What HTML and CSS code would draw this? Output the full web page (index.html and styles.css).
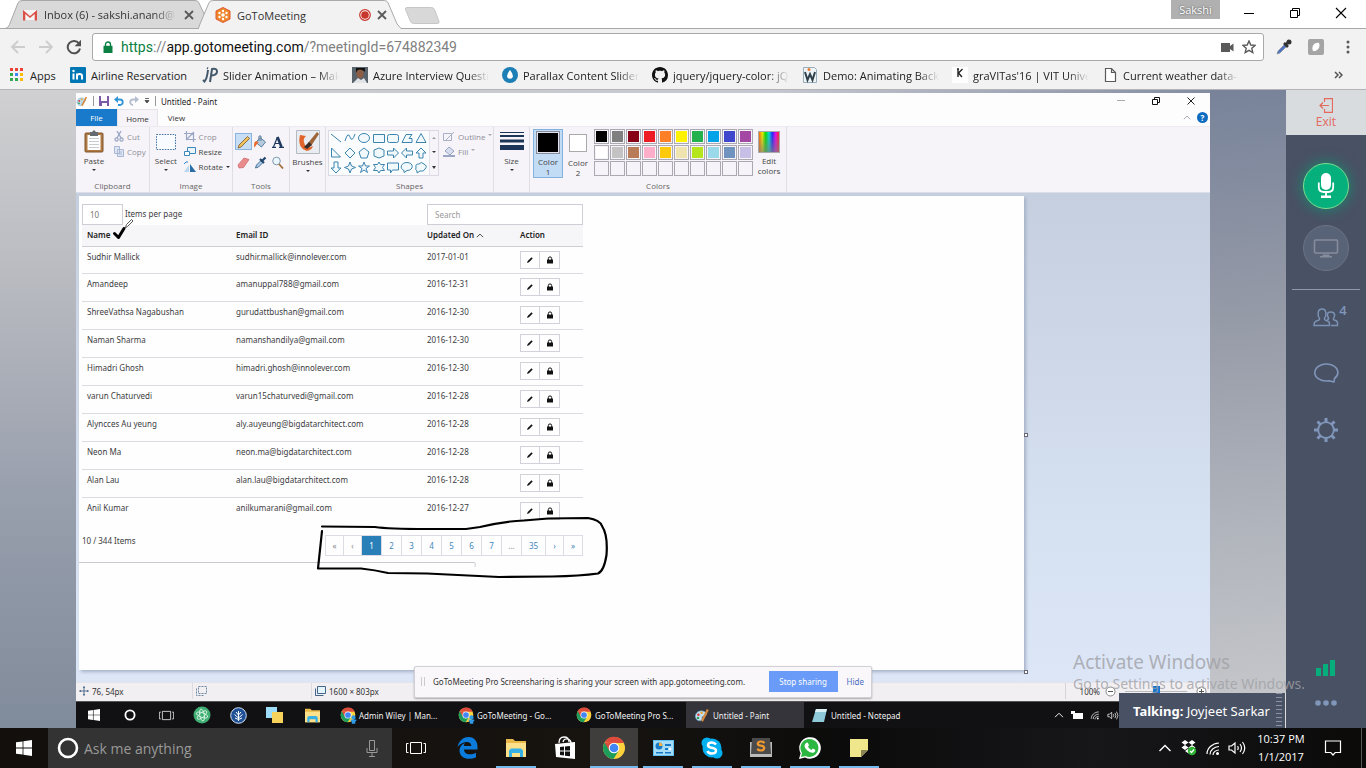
FILE: index.html
```html
<!DOCTYPE html>
<html lang="en">
<head>
<meta charset="utf-8">
<title>GoToMeeting</title>
<link rel="stylesheet" href="styles.css">
</head>
<body>
<svg class="defs" aria-hidden="true">
  <symbol id="i-pencil" viewBox="0 0 8 8"><path d="M1 7l.7-2L5.500 1.200l1.200 1.200L3 6.200z" fill="#111"/></symbol>
  <symbol id="i-lock" viewBox="0 0 8 8"><path d="M2.300 4V2.600a1.700 1.700 0 0 1 3.400 0V4" fill="none" stroke="#111"/><path d="M1 3.600h6V7.500H1z" fill="#111"/></symbol>
  <symbol id="i-win" viewBox="0 0 16 16"><path d="M0 2.300l6.600-.9v6.200H0zM7.400 1.300L16 0v7.600H7.400zM0 8.400h6.600v6.200L0 13.700zM7.400 8.400H16V16l-8.600-1.200z" fill="#fff"/></symbol>
  <symbol id="i-taskview" viewBox="0 0 20 14"><path d="M4.500 1.500h11v11h-11zM2.500 2.500h-2v9h2M17.500 2.500h2v9h-2" fill="none" stroke="#fff"/></symbol>
  <symbol id="i-chrome" viewBox="0 0 24 24"><circle cx="12" cy="12" r="11" fill="#fdd23c"/><path d="M2.500 6.500A11 11 0 0 0 11.500 23l5-8L12 12z" fill="#1c9d5b"/><path d="M2.500 6.500A11 11 0 0 1 22 7H12z" fill="#dd4b3e"/><path d="M2.500 6.500L7.500 15 12 7z" fill="#dd4b3e"/><circle cx="12" cy="12" r="5.300" fill="#fff"/><circle cx="12" cy="12" r="4.300" fill="#4285f4"/></symbol>
  <symbol id="i-folder" viewBox="0 0 22 20"><path d="M1 1h7l2 2h11v16H1z" fill="#e8b84a"/><path d="M1 5h20v14H1z" fill="#fde08a"/><path d="M4 19v-6.500l2-2h10l2 2V19h-3v-4H7v4z" fill="#37b0e6"/></symbol>
  <symbol id="i-wifi" viewBox="0 0 16 16"><g fill="none" stroke="currentColor" stroke-width="1.200"><path d="M2 14C2 8 7 3.500 14 3"/><path d="M5 14.500C5 10 9 7 14 6.500"/><path d="M8 15c0-3 3-5 6-5"/></g><circle cx="12.500" cy="13.500" r="1.500" fill="currentColor"/></symbol>
  <symbol id="i-vol" viewBox="0 0 18 14"><path d="M1 5h2.500L7 2v10L3.500 9H1zM9.500 5q1.500 2 0 4M12 3q3 4 0 8M14.500 1q4.500 6 0 12" fill="none" stroke="currentColor" stroke-width="1.200"/></symbol>
  <symbol id="i-palette" viewBox="0 0 20 18"><path d="M2 12C0 6 7 1 13 4c5 3 2 6-1 6-2 0-2 2-2 4s-6 3-8-2z" fill="#bfe0f2" stroke="#5b93b8" stroke-width=".8"/><circle cx="5.500" cy="8" r="1.600" fill="#d33"/><circle cx="9.500" cy="5.500" r="1.600" fill="#e8a52b"/><circle cx="5" cy="12" r="1.500" fill="#2a9b4e"/><path d="M9 15l7-14 2.500 1.200L11 17z" fill="#d68a3c"/></symbol>
  <symbol id="i-person" viewBox="0 0 10 12"><circle cx="5" cy="3" r="3" fill="#2f9be8"/><path d="M1 6h8v2L7.500 9v3h-5V9L1 8z" fill="#2f9be8"/></symbol>
  <symbol id="i-chev" viewBox="0 0 14 8"><path d="M1.500 7L7 1.500 12.500 7" fill="none" stroke="currentColor" stroke-width="1.400"/></symbol>
</svg>

<header class="browser">
  <div class="tabstrip">
    <div class="tab tab-one">
      <svg class="tab-shape" viewBox="0 0 206 29" preserveAspectRatio="none"><path d="M0 28.500q3 0 4.500-4L13 3q1-2.500 4-2.500h173q3 0 4 2.500l8 17 4 8.500z" fill="#d9d9d9" stroke="#a8a8a8"/></svg>
      <svg width="14" height="12" viewBox="0 0 14 12"><path d="M1 1h12v10H1z" fill="#f5f5f5"/><path d="M0 11.500V1l7 6 7-6v10.500h-2.300V5L7 9 2.300 5v6.500z" fill="#dc5147"/></svg>
      <span class="tab-title fade">Inbox (6) - sakshi.anand@</span>
      <button class="tab-close" aria-label="Close tab"><svg width="10" height="10" viewBox="0 0 10 10"><path d="M1 1l8 8M9 1L1 9" stroke="#5a5a5a" stroke-width="1.800"/></svg></button>
    </div>
    <div class="tab tab-two">
      <svg class="tab-shape" viewBox="0 0 208 29" preserveAspectRatio="none"><path d="M0 29.500L2 24 11 3q1-2.500 4-2.500h173q3 0 4 2.500l9 21 4 4.500v2z" fill="#f2f2f2" stroke="#a8a8a8"/></svg>
      <svg width="16" height="16" viewBox="0 0 16 16"><path d="M8 .5L15 4v8l-7 3.500L1 12V4z" fill="#f0872b" stroke="#dd5a2b"/><circle cx="8" cy="8" r="1.800" fill="#fff"/><g fill="#fff"><circle cx="8" cy="4" r="1.200"/><circle cx="8" cy="12" r="1.200"/><circle cx="4.500" cy="6" r="1.200"/><circle cx="11.500" cy="6" r="1.200"/><circle cx="4.500" cy="10" r="1.200"/><circle cx="11.500" cy="10" r="1.200"/></g></svg>
      <span class="tab-title">GoToMeeting</span>
      <svg width="12" height="12" viewBox="0 0 12 12"><circle cx="6" cy="6" r="5.300" fill="#fff" stroke="#c8372d" stroke-width="1.200"/><circle cx="6" cy="6" r="3.800" fill="#c8372d"/></svg>
      <button class="tab-close" aria-label="Close tab"><svg width="10" height="10" viewBox="0 0 10 10"><path d="M1 1l8 8M9 1L1 9" stroke="#5a5a5a" stroke-width="1.800"/></svg></button>
    </div>
    <button class="newtab" aria-label="New tab"><svg width="36" height="19" viewBox="0 0 36 19"><path d="M2.500 1.500h25q2 0 3 2l4.500 12q.5 2-1.500 2h-24q-2 0-3-2L1.500 3.500q-.5-2 1-2z" fill="#d8d8d8" stroke="#c6c6c6"/></svg></button>
    <div class="win-controls">
      <button class="profile">Sakshi</button>
      <button aria-label="Minimize"><svg width="12" height="12" viewBox="0 0 12 12"><path d="M1 6.500h10" stroke="#000"/></svg></button>
      <button aria-label="Restore"><svg width="12" height="12" viewBox="0 0 12 12"><path d="M1.500 3.500h7v7h-7zM3.500 3.500v-2h7v7h-2" fill="none" stroke="#000"/></svg></button>
      <button aria-label="Close"><svg width="12" height="12" viewBox="0 0 12 12"><path d="M1 1l10 10M11 1L1 11" stroke="#000" stroke-width="1.100"/></svg></button>
    </div>
  </div>
  <div class="toolbar">
    <button aria-label="Back"><svg width="16" height="16" viewBox="0 0 16 16"><path d="M15 8H2M8 2L2 8l6 6" fill="none" stroke="#ccc" stroke-width="1.800"/></svg></button>
    <button aria-label="Forward"><svg width="16" height="16" viewBox="0 0 16 16"><path d="M1 8h13M8 2l6 6-6 6" fill="none" stroke="#ccc" stroke-width="1.800"/></svg></button>
    <button aria-label="Reload"><svg width="16" height="16" viewBox="0 0 16 16"><path d="M13 4.500A6.200 6.200 0 1 0 14 9.500" fill="none" stroke="#505050" stroke-width="2"/><path d="M15 .8v6.400H8.600z" fill="#505050"/></svg></button>
    <div class="omnibox">
      <svg width="10" height="12" viewBox="0 0 10 12"><path d="M2.500 6V3.500a2.500 2.500 0 0 1 5 0V6" fill="none" stroke="#0b8043" stroke-width="1.400"/><path d="M.5 4.800h9V12h-9z" fill="#0b8043"/></svg>
      <div class="url" role="textbox" aria-label="Address" contenteditable="true" spellcheck="false"><span class="secure">https</span>://<span class="host">app.gotomeeting.com</span>/?meetingId=674882349</div>
      <svg width="13" height="9" viewBox="0 0 13 9"><path d="M0 0h9v3l3.500-2.500v8L9 6v3H0z" fill="#5a5a5a"/></svg>
      <svg width="14" height="14" viewBox="0 0 14 14"><path d="M7 1l1.800 4 4.200.4-3.200 2.900 1 4.300L7 10.400l-3.800 2.200 1-4.300L1 5.400 5.200 5z" fill="none" stroke="#5a5a5a" stroke-width="1.400"/></svg>
    </div>
    <div class="extensions">
      <button aria-label="Color picker"><svg width="16" height="16" viewBox="0 0 16 16"><path d="M1 15l1-3 6.500-6.500 2 2L4 14z" fill="#4f73c4" stroke="#8b9097" stroke-width=".8"/><path d="M8 4l4 4M9.500 6l4-4" stroke="#333" stroke-width="2.600"/><circle cx="13" cy="3" r="2.500" fill="#333"/></svg></button>
      <button aria-label="Extension"><svg width="16" height="16" viewBox="0 0 16 16"><rect width="16" height="16" rx="2" fill="#a4a4a4"/><path d="M5 12C3 8 6 3 11 4c2 4-2 9-6 8z" fill="#fff"/></svg></button>
      <button class="menu" aria-label="Menu"><svg width="4" height="14" viewBox="0 0 4 14"><g fill="#5a5a5a"><circle cx="2" cy="2" r="1.500"/><circle cx="2" cy="7" r="1.500"/><circle cx="2" cy="12" r="1.500"/></g></svg></button>
    </div>
  </div>
  <nav class="bookmarks">
    <a class="bm bm-apps" href="#"><svg width="14" height="14" viewBox="0 0 14 14"><path d="M0 0h3v3H0zM5 0h3v3H5zM10 0h3v3h-3z" fill="#ea4335"/><path d="M0 5h3v3H0z" fill="#34a853"/><path d="M5 5h3v3H5z" fill="#4285f4"/><path d="M10 5h3v3h-3zM10 10h3v3h-3z" fill="#fbbc05"/><path d="M0 10h3v3H0zM5 10h3v3H5z" fill="#34a853"/></svg><span>Apps</span></a>
    <a class="bm bm-air" href="#"><svg width="16" height="16" viewBox="0 0 16 16"><rect width="16" height="16" rx="1" fill="#0077b5"/><path d="M3.500 6.500v6M7 12.500v-6M7 12.500V9q0-2 2.500-2T12 9v3.500" fill="none" stroke="#fff" stroke-width="2"/><circle cx="3.500" cy="4" r="1.200" fill="#fff"/></svg><span>Airline Reservation</span></a>
    <a class="bm" href="#"><svg width="16" height="16" viewBox="0 0 16 16"><path d="M6 3Q5 12 2.500 14.500L1 13M8 15L10 2q5-1 5 2.500T9.500 8.500M5 1l1 .5" fill="none" stroke="#44586c" stroke-width="2"/></svg><span class="fade">Slider Animation – Make</span></a>
    <a class="bm" href="#"><svg width="16" height="16" viewBox="0 0 16 16"><path d="M0 0h16v16H0z" fill="#59636b"/><path d="M4 1h9v4l-2-2H6L4 6z" fill="#15110f"/><ellipse cx="8" cy="6.500" rx="3.500" ry="4.500" fill="#8d5d43"/><path d="M1 16l5-5 3 2 3-2 3 5z" fill="#e1e3e7"/><path d="M4 4q4-3 8 0V1H4z" fill="#111"/></svg><span class="fade">Azure Interview Questio</span></a>
    <a class="bm" href="#"><svg width="16" height="16" viewBox="0 0 16 16"><circle cx="8" cy="8" r="8" fill="#1c7fb5"/><path d="M8 3q4 5 2.500 7.500a3 3 0 0 1-5 0Q4 8 8 3z" fill="#fff"/></svg><span class="fade">Parallax Content Slider</span></a>
    <a class="bm" href="#"><svg width="16" height="16" viewBox="0 0 16 16"><path fill-rule="evenodd" fill="#111" d="M8 0C3.580 0 0 3.580 0 8c0 3.540 2.290 6.530 5.470 7.590.4.070.55-.17.550-.38 0-.19-.01-.82-.01-1.490-2.010.37-2.530-.49-2.690-.94-.09-.23-.48-.94-.82-1.130-.28-.15-.68-.52-.01-.53.630-.01 1.080.58 1.230.82.720 1.210 1.870.87 2.330.66.070-.52.280-.87.510-1.070-1.780-.2-3.640-.89-3.640-3.950 0-.87.310-1.590.820-2.150-.08-.2-.36-1.020.08-2.120 0 0 .67-.21 2.200.82.640-.18 1.320-.27 2-.27s1.360.09 2 .27c1.530-1.040 2.200-.82 2.200-.82.440 1.100.16 1.920.08 2.120.51.560.82 1.270.82 2.150 0 3.070-1.870 3.750-3.650 3.950.29.250.54.730.54 1.480 0 1.070-.01 1.930-.01 2.200 0 .21.15.46.55.38A8.010 8.010 0 0 0 16 8c0-4.420-3.580-8-8-8z"/></svg><span class="fade">jquery/jquery-color: jQu</span></a>
    <a class="bm" href="#"><svg width="16" height="16" viewBox="0 0 16 16"><path d="M1.500.5h11l2 2v13h-13z" fill="#eef4f7" stroke="#9aaeb9"/><path d="M3 5l2.500 8L8 7l2.500 6L13 5" fill="none" stroke="#30414c" stroke-width="2"/><circle cx="7" cy="2.500" r="1.500" fill="#e77c35"/></svg><span class="fade">Demo: Animating Back</span></a>
    <a class="bm" href="#"><svg width="16" height="16" viewBox="0 0 16 16"><path d="M0 0h16v16H0z" fill="#fff"/><path d="M6 2v8M10.500 2L6.500 6l3.500 4M5 2h2" fill="none" stroke="#222" stroke-width="1.400"/></svg><span class="fade">graVITas'16 | VIT Univer</span></a>
    <a class="bm" href="#"><svg width="16" height="16" viewBox="0 0 16 16"><path d="M3.500 1.500h6l4 4v9h-10zM9.500 1.500v4h4" fill="#fff" stroke="#5a5a5a" stroke-width="1.200"/></svg><span class="fade">Current weather data-</span></a>
    <button class="bm-more" aria-label="More bookmarks"><svg width="9" height="8" viewBox="0 0 9 8"><path d="M1 1l3 3-3 3M5 1l3 3-3 3" fill="none" stroke="#555" stroke-width="1.500"/></svg></button>
  </nav>
</header>

<main class="meeting">
  <section class="stage">
    <div class="paint">
      <div class="p-title">
        <svg width="12" height="11"><use href="#i-palette"/></svg>
        <i class="p-sep"></i>
        <button aria-label="Save"><svg width="10" height="10" viewBox="0 0 10 10"><path d="M0 0h10v10H0z" fill="#7b5ba6"/><path d="M2 0h6v5H2zM3 7h5v3H3z" fill="#fff"/></svg></button>
        <button aria-label="Undo"><svg width="10" height="10" viewBox="0 0 10 10"><path d="M2 3.500h4a2.500 2.500 0 0 1 0 5.500H4" fill="none" stroke="#2f95d6" stroke-width="1.800"/><path d="M0 3.500L4 0v7z" fill="#2f95d6"/></svg></button>
        <button aria-label="Redo"><svg width="10" height="10" viewBox="0 0 10 10"><path d="M8 3.500H4A2.500 2.500 0 0 0 4 9" fill="none" stroke="#b5bdd0" stroke-width="1.800"/><path d="M10 3.500L6 0v7z" fill="#b5bdd0"/></svg></button>
        <button aria-label="Customize"><svg width="6" height="6" viewBox="0 0 6 6"><path d="M1 .5h4M1 2.500h4L3 5z" stroke="#444" stroke-width=".8" fill="#444"/></svg></button>
        <i class="p-sep"></i>
        <span>Untitled - Paint</span>
        <div class="p-win">
          <button aria-label="Minimize"><svg width="10" height="10" viewBox="0 0 10 10"><path d="M1 4.500h8" stroke="#aaa"/></svg></button>
          <button aria-label="Restore"><svg width="10" height="10" viewBox="0 0 10 10"><path d="M1.500 3.500h5v5h-5zM3.500 3.500v-2h5v5h-2" fill="none" stroke="#111"/></svg></button>
          <button aria-label="Close"><svg width="10" height="10" viewBox="0 0 10 10"><path d="M1.500 1.500l7 7M8.500 1.500l-7 7" stroke="#222"/></svg></button>
        </div>
      </div>
      <div class="p-tabs">
        <button class="p-file">File</button>
        <button class="p-home">Home</button>
        <button class="p-view">View</button>
        <div class="p-help">
          <svg width="8" height="5" class="muted"><use href="#i-chev"/></svg>
          <button aria-label="Help" class="help">?</button>
        </div>
      </div>
      <div class="ribbon">
        <div class="group g-clip">
          <div class="g-body">
            <button class="big"><svg width="20" height="23" viewBox="0 0 20 23"><rect x="1" y="3" width="18" height="19" rx="1" fill="#b07a45" stroke="#80542b"/><path d="M3.500 5h13v15h-13z" fill="#fff"/><path d="M5 8.500h10M5 11.500h10M5 14.500h10M5 17.500h10" stroke="#c9cdd2"/><path d="M6 2h2l2-2 2 2h2v4H6z" fill="#666b72"/></svg><span>Paste</span><i class="caret"></i></button>
            <div class="stack muted">
              <button><svg width="10" height="11" viewBox="0 0 10 11"><path d="M3 0l4 7M7 0L3 7" stroke="#9aa6c4" stroke-width="1.300"/><circle cx="2.500" cy="8.500" r="1.600" fill="none" stroke="#9aa6c4" stroke-width="1.200"/><circle cx="7.500" cy="8.500" r="1.600" fill="none" stroke="#9aa6c4" stroke-width="1.200"/></svg>Cut</button>
              <button><svg width="10" height="11" viewBox="0 0 10 11"><path d="M.5.5h5v7h-5zM3.500 3.500h6v7h-6z" fill="#dfe6f3" stroke="#a8b5d3"/><path d="M5 6h3M5 8h3" stroke="#a8b5d3"/></svg>Copy</button>
            </div>
          </div>
          <span class="g-name">Clipboard</span>
        </div>
        <div class="group g-image">
          <div class="g-body">
            <button class="big"><svg width="22" height="23" viewBox="0 0 22 23"><path d="M1.500 4.500h19v15h-19z" fill="#f8fbff" stroke="#3f6f9f" stroke-dasharray="1.500 1.200"/></svg><span>Select</span><i class="caret"></i></button>
            <div class="stack">
              <button class="muted"><svg width="12" height="11" viewBox="0 0 12 11"><path d="M2.500 0v8.500H12M0 2.500h9.500V11M2 9l8-8" fill="none" stroke="#9aa6c4" stroke-width="1.200"/></svg>Crop</button>
              <button><svg width="12" height="11" viewBox="0 0 12 11"><path d="M3.500 1.500h8v6h-8z" fill="#eaf4fc" stroke="#3b87bc"/><path d="M.5 5.500h5v4h-5z" fill="#fff" stroke="#3b87bc"/></svg>Resize</button>
              <button><svg width="12" height="11" viewBox="0 0 12 11"><path d="M6 3l6 8H6z" fill="#2c6ca5"/><path d="M5 4v7H0z" fill="#b9d7ee"/><path d="M0 3q2-3 4-2" fill="none" stroke="#2c86d0"/></svg>Rotate<i class="caret"></i></button>
            </div>
          </div>
          <span class="g-name">Image</span>
        </div>
        <div class="group g-tools">
          <div class="tool-grid">
            <button class="on" aria-label="Pencil"><svg width="14" height="14" viewBox="0 0 14 14"><path d="M1 13l1-3L10.500 1.500l2 2L4 12z" fill="#f0c05a" stroke="#7b5b30" stroke-width=".8"/></svg></button>
            <button aria-label="Fill"><svg width="13" height="13" viewBox="0 0 13 13"><path d="M6 2.500l5.500 4.500-4 5-5.500-4.500z" fill="#b5cbe0" stroke="#5c7e9e"/><path d="M5 6V1h2v5" fill="none" stroke="#5c7e9e"/><path d="M.5 7.500q-1 3 0 5l4-5.500q-3-1.500-4 .5z" fill="#ec6a2c"/></svg></button>
            <button aria-label="Text"><svg width="12" height="12" viewBox="0 0 12 12"><path d="M0 11.300h4M7 11.300h5M3 7.500h5" stroke="#1f3a5f" stroke-width="1.200"/><path d="M1.500 11L5.500 1" stroke="#1f3a5f" stroke-width="1.200"/><path d="M5.500 1l4 10" stroke="#1f3a5f" stroke-width="2.600"/></svg></button>
            <button aria-label="Eraser"><svg width="13" height="12" viewBox="0 0 13 12"><path d="M1 8l6-7 5 1.500-5.500 8L2 11z" fill="#eb8c8c" stroke="#c96a6e" stroke-width=".8"/></svg></button>
            <button aria-label="Pick color"><svg width="13" height="13" viewBox="0 0 13 13"><path d="M1.500 12l1-3L7 4.500l2 2L4.500 11z" fill="#a9cbe7" stroke="#4c7396"/><path d="M6 3l4 4M8 5l3.500-3.500" stroke="#20466e" stroke-width="2.200"/></svg></button>
            <button aria-label="Magnifier"><svg width="13" height="13" viewBox="0 0 13 13"><circle cx="5.500" cy="5" r="3.800" fill="#eaf5fd" stroke="#7f99ad"/><path d="M8 8l4 4.500" stroke="#a36f3c" stroke-width="1.800"/></svg></button>
          </div>
          <span class="g-name">Tools</span>
        </div>
        <div class="group g-brush">
          <div class="g-body">
            <button class="big"><svg width="24" height="24" viewBox="0 0 24 24"><path d="M.5.5h23v23H.5z" fill="#e9ecf1" stroke="#b5b9c2"/><path d="M4 5q-3 13 7 16 5-1 6-5-6 3-8-1Q6 9 10 6z" fill="#e2652c"/><path d="M12 13L21 2l2 2-8 12z" fill="#9c6438"/><path d="M8 17l5-5 3 3-5 4z" fill="#3a2d28"/></svg><span>Brushes</span><i class="caret"></i></button>
          </div>
        </div>
        <div class="group g-shapes">
          <div class="g-body">
            <div class="shape-box">
              <svg width="100" height="44" viewBox="0 0 100 44"><g fill="#f2f9fd" stroke="#3d85ad"><path d="M2 3l10 8"/><path d="M16 10q3-10 5-4t5-3" fill="none"/><ellipse cx="35" cy="7" rx="5.500" ry="4.500"/><path d="M44.500 3.500h11v8h-11z"/><rect x="58.500" y="3.500" width="11" height="8" rx="2"/><path d="M73 11.500l4-8h6l-3 4h3v4z"/><path d="M92 2.500l5 9H87z"/><path d="M2.500 17v9h9z"/><path d="M21 17l5 5-5 5-5-5z"/><path d="M35 17l5 4-2 6h-6l-2-6z"/><path d="M45 19l5-2 5 2v6l-5 2-5-2z"/><path d="M58.500 20h6v-3l5 5-5 5v-3h-6z"/><path d="M83.500 20h-6v-3l-5 5 5 5v-3h6z"/><path d="M90 27v-5h-3l5-5 5 5h-3v5z"/><path d="M5 31v6H2l5 5 5-5H9v-6z"/><path d="M21 31l1.500 4 4 1.500-4 1.500L21 42l-1.500-4-4-1.500 4-1.500z"/><path d="M35 31l1.500 4h4L37 37.500l1.500 4L35 39l-3.500 2.500 1.500-4-3.500-2.500h4z"/><path d="M50 31l1.500 2.500h4L53.500 36.500l2 3h-4L50 42l-1.500-2.500h-4l2-3-2-3h4z"/><path d="M58.500 32h11v7h-6l-2 3v-3h-3z"/><path d="M78 31.500c7 0 7 8 0 8l-3 2v-2c-5-2-3-8 3-8z"/><path d="M87 36q-1-3 3-3 2-3 5 0 4 2 1 5-1 3-5 2l-3 2v-2q-2-1-1-4z"/></g></svg>
              <div class="scroll"><i class="caret up"></i><i class="caret"></i><i class="caret last"></i></div>
            </div>
            <div class="stack muted">
              <button><svg width="12" height="11" viewBox="0 0 12 11"><path d="M.5 2.500h8v7h-8zM3 9l8-8" fill="none" stroke="#a8b0c6"/></svg>Outline<i class="caret pale"></i></button>
              <button><svg width="12" height="11" viewBox="0 0 12 11"><path d="M2 5l4-4 5 4-4 4z" fill="#d7deed" stroke="#9aa6c4"/><path d="M0 9h12v2H0z" fill="#9aa6c4"/></svg>Fill<i class="caret pale"></i></button>
            </div>
          </div>
          <span class="g-name">Shapes</span>
        </div>
        <div class="group g-size">
          <div class="g-body">
            <button class="big"><svg width="24" height="23" viewBox="0 0 24 23"><path d="M0 2h24v1H0zM0 5h24v2H0zM0 9.500h24v3H0zM0 15h24v5H0z" fill="#1d3557"/></svg><span>Size</span><i class="caret"></i></button>
          </div>
        </div>
        <div class="group g-colors">
          <div class="g-body">
            <button class="col col-on"><i class="sw-big"></i><span>Color<br>1</span></button>
            <button class="col"><i class="sw-small"></i><span>Color<br>2</span></button>
            <div class="palette">
              <i class="c-black"></i><i class="c-gray"></i><i class="c-maroon"></i><i class="c-red"></i><i class="c-orange"></i><i class="c-yellow"></i><i class="c-green"></i><i class="c-blue"></i><i class="c-indigo"></i><i class="c-purple"></i>
              <i class="c-white"></i><i class="c-silver"></i><i class="c-brown"></i><i class="c-pink"></i><i class="c-gold"></i><i class="c-cream"></i><i class="c-lime"></i><i class="c-sky"></i><i class="c-steel"></i><i class="c-lilac"></i>
              <i></i><i></i><i></i><i></i><i></i><i></i><i></i><i></i><i></i><i></i>
            </div>
            <button class="col col-edit"><i class="rainbow"></i><span>Edit<br>colors</span></button>
          </div>
          <span class="g-name">Colors</span>
        </div>
      </div>

      <div class="workspace">
        <div class="canvas">
          <div class="doc">
            <div class="filters">
              <div><input id="pp" class="inp inp-n" type="text" value="10"><label for="pp">Items per page</label></div>
              <input class="inp inp-s" type="text" placeholder="Search" aria-label="Search">
            </div>
            <table>
              <thead><tr><th class="t-name">Name</th><th class="t-mail">Email ID</th><th class="t-date">Updated On <svg width="8" height="5"><use href="#i-chev"/></svg></th><th>Action</th></tr></thead>
              <tbody>
                <tr><td>Sudhir Mallick</td><td>sudhir.mallick@innolever.com</td><td>2017-01-01</td><td><div class="acts"><button aria-label="Edit"><svg width="8" height="8"><use href="#i-pencil"/></svg></button><button aria-label="Lock"><svg width="8" height="8"><use href="#i-lock"/></svg></button></div></td></tr>
                <tr><td>Amandeep</td><td>amanuppal788@gmail.com</td><td>2016-12-31</td><td><div class="acts"><button aria-label="Edit"><svg width="8" height="8"><use href="#i-pencil"/></svg></button><button aria-label="Lock"><svg width="8" height="8"><use href="#i-lock"/></svg></button></div></td></tr>
                <tr><td>ShreeVathsa Nagabushan</td><td>gurudattbushan@gmail.com</td><td>2016-12-30</td><td><div class="acts"><button aria-label="Edit"><svg width="8" height="8"><use href="#i-pencil"/></svg></button><button aria-label="Lock"><svg width="8" height="8"><use href="#i-lock"/></svg></button></div></td></tr>
                <tr><td>Naman Sharma</td><td>namanshandilya@gmail.com</td><td>2016-12-30</td><td><div class="acts"><button aria-label="Edit"><svg width="8" height="8"><use href="#i-pencil"/></svg></button><button aria-label="Lock"><svg width="8" height="8"><use href="#i-lock"/></svg></button></div></td></tr>
                <tr><td>Himadri Ghosh</td><td>himadri.ghosh@innolever.com</td><td>2016-12-30</td><td><div class="acts"><button aria-label="Edit"><svg width="8" height="8"><use href="#i-pencil"/></svg></button><button aria-label="Lock"><svg width="8" height="8"><use href="#i-lock"/></svg></button></div></td></tr>
                <tr><td>varun Chaturvedi</td><td>varun15chaturvedi@gmail.com</td><td>2016-12-28</td><td><div class="acts"><button aria-label="Edit"><svg width="8" height="8"><use href="#i-pencil"/></svg></button><button aria-label="Lock"><svg width="8" height="8"><use href="#i-lock"/></svg></button></div></td></tr>
                <tr><td>Alyncces Au yeung</td><td>aly.auyeung@bigdatarchitect.com</td><td>2016-12-28</td><td><div class="acts"><button aria-label="Edit"><svg width="8" height="8"><use href="#i-pencil"/></svg></button><button aria-label="Lock"><svg width="8" height="8"><use href="#i-lock"/></svg></button></div></td></tr>
                <tr><td>Neon Ma</td><td>neon.ma@bigdatarchitect.com</td><td>2016-12-28</td><td><div class="acts"><button aria-label="Edit"><svg width="8" height="8"><use href="#i-pencil"/></svg></button><button aria-label="Lock"><svg width="8" height="8"><use href="#i-lock"/></svg></button></div></td></tr>
                <tr><td>Alan Lau</td><td>alan.lau@bigdatarchitect.com</td><td>2016-12-28</td><td><div class="acts"><button aria-label="Edit"><svg width="8" height="8"><use href="#i-pencil"/></svg></button><button aria-label="Lock"><svg width="8" height="8"><use href="#i-lock"/></svg></button></div></td></tr>
                <tr><td>Anil Kumar</td><td>anilkumarani@gmail.com</td><td>2016-12-27</td><td><div class="acts"><button aria-label="Edit"><svg width="8" height="8"><use href="#i-pencil"/></svg></button><button aria-label="Lock"><svg width="8" height="8"><use href="#i-lock"/></svg></button></div></td></tr>
              </tbody>
            </table>
            <div class="pager-row">
              <span>10 / 344 Items</span>
              <nav class="pager"><a href="#" class="dim arr">«</a><a href="#" class="dim arr">‹</a><a href="#" class="cur">1</a><a href="#">2</a><a href="#">3</a><a href="#">4</a><a href="#">5</a><a href="#">6</a><a href="#">7</a><a href="#" class="dim">...</a><a href="#" class="wide">35</a><a href="#" class="arr">›</a><a href="#" class="arr">»</a></nav>
            </div>
          </div>
          <svg class="ink" width="945" height="474" viewBox="79 196 945 474"><g fill="none" stroke-linecap="round" stroke-linejoin="round"><path d="M79 562.500h395q2 0 1 4" stroke="#ccc8d2"/><path d="M322 526.500L375 527Q388 529 427 529L466 529 480 527Q505 521 524 520.500L548 518.500 588 518Q600 520 602 526 608 535 606.500 555 604 571 598 573.500 580 576 552 576.500L499 577Q440 574 427 573.500L388 573Q375 570 361 568.500L318 568.500 322 531" stroke="#000" stroke-width="2.200"/><path d="M114.500 233.500l4 4q3-5 5.500-9" stroke="#000" stroke-width="3"/><path d="M125.500 227.500l1-3 5-5 1.500 1.500-5 5z" stroke="#555" fill="#fff"/></g></svg>
          <i class="handle h-right"></i><i class="handle h-corner"></i>
        </div>
      </div>

      <div class="p-status">
        <span class="st st-pos"><svg width="10" height="10" viewBox="0 0 10 10"><path d="M5 0v10M0 5h10M4 1.500h2M4 8.500h2M1.500 4v2M8.500 4v2" stroke="#55708f"/></svg>76, 54px</span>
        <span class="st st-sel"><svg width="11" height="10" viewBox="0 0 11 10"><path d="M.5 2.500v7h8M2.500.5h8v7h-8z" fill="none" stroke="#7089a5" stroke-dasharray="2 1"/></svg></span>
        <span class="st st-dim"><svg width="11" height="10" viewBox="0 0 11 10"><path d="M.5 2.500v7h8" fill="none" stroke="#44658a"/><path d="M2.500.5h8v7h-8z" fill="#e3f4fa" stroke="#44658a"/></svg>1600 × 803px</span>
        <div class="zoomer"><span>100%</span><button class="zb" aria-label="Zoom out"><svg width="11" height="11" viewBox="0 0 11 11"><circle cx="5.500" cy="5.500" r="4.500" fill="#fff" stroke="#888"/><path d="M3 5.500h5" stroke="#555"/></svg></button><input type="range" aria-label="Zoom" class="range"><button class="zb" aria-label="Zoom in"><svg width="11" height="11" viewBox="0 0 11 11"><circle cx="5.500" cy="5.500" r="4.500" fill="#fff" stroke="#888"/><path d="M3 5.500h5M5.500 3v5" stroke="#555"/></svg></button></div>
      </div>

      <div class="inner-bar">
        <button class="ib" aria-label="Start"><svg width="12" height="12"><use href="#i-win"/></svg></button>
        <button class="ib" aria-label="Cortana"><svg width="12" height="12" viewBox="0 0 12 12"><circle cx="6" cy="6" r="4.600" fill="none" stroke="#fff" stroke-width="1.800"/></svg></button>
        <button class="ib" aria-label="Task view"><svg width="15" height="11"><use href="#i-taskview"/></svg></button>
        <button class="ib" aria-label="Atom"><svg width="18" height="18" viewBox="0 0 18 18"><circle cx="9" cy="9" r="8.500" fill="#3fae73"/><g fill="none" stroke="#d9f5e6" stroke-width=".9"><ellipse cx="9" cy="9" rx="6" ry="2.300" transform="rotate(20 9 9)"/><ellipse cx="9" cy="9" rx="6" ry="2.300" transform="rotate(80 9 9)"/><ellipse cx="9" cy="9" rx="6" ry="2.300" transform="rotate(140 9 9)"/></g></svg></button>
        <button class="ib" aria-label="SourceTree"><svg width="17" height="17" viewBox="0 0 17 17"><circle cx="8.500" cy="8.500" r="7.800" fill="#1f4f95" stroke="#d6e3f5"/><path d="M8.500 14V4M8.500 11L4.500 7.500M8.500 11l4-3.500M8.500 8L6 5M8.500 8L11 5M5 11l3.500 1.500L12 11" stroke="#fff" fill="none"/></svg></button>
        <button class="ib" aria-label="Sticky Notes"><svg width="17" height="16" viewBox="0 0 17 16"><path d="M0 0h11v11H0z" fill="#9fdcf7"/><path d="M6 5h11v11H6z" fill="#f8d35c"/></svg></button>
        <button class="ib" aria-label="Explorer"><svg width="17" height="15"><use href="#i-folder"/></svg></button>
        <button class="task"><span class="badge-ic"><svg width="16" height="16"><use href="#i-chrome"/></svg><svg class="mini" width="7" height="9"><use href="#i-person"/></svg></span>Admin Wiley | Man...</button>
        <button class="task"><span class="badge-ic"><svg width="16" height="16"><use href="#i-chrome"/></svg><svg class="mini" width="7" height="9"><use href="#i-person"/></svg></span>GoToMeeting - Go...</button>
        <button class="task"><svg width="16" height="16"><use href="#i-chrome"/></svg>GoToMeeting Pro S...</button>
        <button class="task task-on"><svg width="16" height="15"><use href="#i-palette"/></svg>Untitled - Paint</button>
        <button class="task"><svg width="16" height="15" viewBox="0 0 16 15"><path d="M4 1h11l-3 13H0z" fill="#8ec9d9"/><path d="M4 1h11l-1 3H3z" fill="#d9eff4"/></svg>Untitled - Notepad</button>
        <div class="inner-tray"><svg width="10" height="6"><use href="#i-chev"/></svg><svg width="12" height="8" viewBox="0 0 12 8"><path d="M2 2h10v6H2zM0 0h4v3H0z" fill="#fff"/></svg><svg width="10" height="10"><use href="#i-wifi"/></svg><svg width="12" height="9"><use href="#i-vol"/></svg></div>
      </div>

      <div class="share">
        <i class="grip"></i>
        <span>GoToMeeting Pro Screensharing is sharing your screen with app.gotomeeting.com.</span>
        <button>Stop sharing</button>
        <a href="#">Hide</a>
      </div>
    </div>
  </section>

  <aside class="side">
    <button class="exit"><svg width="14" height="15" viewBox="0 0 14 15"><path d="M5.500 4V.7h8v13.600h-8V11M10 7.500H1M4 4.500l-3 3 3 3" fill="none" stroke="#e36a5e" stroke-width="1.200"/></svg>Exit</button>
    <button class="round mic" aria-label="Microphone"><svg width="18" height="26" viewBox="0 0 18 26"><rect x="4" y="0" width="10" height="17" rx="5" fill="#fff"/><path d="M1.800 9.500v4.500q0 5 5 5h4.400q5 0 5-5V9.500M9 19v4" fill="none" stroke="#fff" stroke-width="1.800"/><path d="M4 22.500h10V25H4z" fill="#fff"/></svg></button>
    <button class="round screen" aria-label="Screen"><svg width="26" height="19" viewBox="0 0 26 19"><rect x="1.500" y="1" width="23" height="13" rx="1" fill="none" stroke="#858d9d" stroke-width="1.600"/><path d="M10 15.500h6l.8 1.500H19v1.500H7V17h2.200z" fill="#858d9d"/></svg></button>
    <hr>
    <button class="si people" aria-label="People"><svg width="26" height="20" viewBox="0 0 26 20"><g fill="none" stroke="#7c92b4" stroke-width="1.500"><path d="M1 18.500q0-4 3-4.700t2.500-2.500C4.500 9 4 2 9 2s4.500 7 2.500 9.300q-.5 1.800 2.500 2.500t2.500 4.700z"/><path d="M14 12.500q2 0 1.500-1.500C13.500 8 14 5 18 5s4.500 4 2.500 6.500q-.5 1.500 2 2t2 5H18"/></g></svg><sup>4</sup></button>
    <button class="si" aria-label="Chat"><svg width="26" height="21" viewBox="0 0 26 21"><path d="M16 17.800A11.500 8.500 0 1 1 21.500 15.500l-.5 3.500z" fill="none" stroke="#8096ba" stroke-width="1.600" stroke-linejoin="round"/></svg></button>
    <button class="si" aria-label="Settings"><svg width="26" height="26" viewBox="0 0 26 26"><circle cx="13" cy="13" r="7.800" fill="none" stroke="#8096ba" stroke-width="1.800"/><path d="M13 1v4M13 21v4M1 13h4M21 13h4M4.500 4.500l3 3M18.500 18.500l3 3M21.500 4.500l-3 3M7.500 18.500l-3 3" stroke="#8096ba" stroke-width="3"/></svg></button>
    <div class="side-end">
      <svg width="20" height="17" viewBox="0 0 20 17"><path d="M0 9h5v8H0zM7 5h5v12H7zM14 1h5v16h-5z" fill="#05ae7a"/></svg>
      <button aria-label="More"><svg width="22" height="6" viewBox="0 0 22 6"><g fill="#8096ba"><circle cx="3" cy="3" r="2.800"/><circle cx="11" cy="3" r="2.800"/><circle cx="19" cy="3" r="2.800"/></g></svg></button>
    </div>
  </aside>

  <div class="talking"><p><b>Talking:</b> Joyjeet Sarkar</p><i class="drag"></i></div>
  <div class="watermark"><p class="w1">Activate Windows</p><p class="w2">Go to Settings to activate Windows.</p></div>
</main>

<footer class="taskbar">
  <button class="start" aria-label="Start"><svg width="16" height="16"><use href="#i-win"/></svg></button>
  <div class="cortana">
    <svg width="22" height="22" viewBox="0 0 22 22"><circle cx="11" cy="11" r="9" fill="none" stroke="#fff" stroke-width="2.600"/></svg>
    <input type="text" placeholder="Ask me anything" aria-label="Ask me anything">
    <svg width="12" height="17" viewBox="0 0 12 17"><path d="M3.500.5h5v10h-5zM1 8v4.500h10V8M6 12.500V16M3 16.500h6" fill="none" stroke="#999"/></svg>
  </div>
  <button class="tb tb-view" aria-label="Task view"><svg width="20" height="14"><use href="#i-taskview"/></svg></button>
  <button class="tb" aria-label="Edge"><svg width="21" height="22" viewBox="0 0 21 22"><path d="M.5 10C2 3 7 0 11.500 0 17.500 0 20.500 4.500 20.500 10v2.500H7c.3 5.500 7 6 12 3.200v4.500C11 24 3 21 2.500 14 2.300 10.500 4.500 7.500 8 6c-.8 1-1.200 2-1.200 3h7.500c0-6-9-5-13.800 1z" fill="#0b7bdc"/></svg></button>
  <button class="tb run" aria-label="File Explorer"><svg width="22" height="20"><use href="#i-folder"/></svg></button>
  <button class="tb" aria-label="Store"><svg width="22" height="24" viewBox="0 0 22 24"><path d="M1 8l20-2v17L2 21z" fill="#fff"/><path d="M5 7q0-6 5-6t5 5M9 6q1-4 5-3 3 1 3 4" fill="none" stroke="#fff" stroke-width="1.300"/><path d="M6 11l4-.5v4H6zM11 10.400l5-.5v4.600h-5zM6 15.500h4v4L6 19zM11 15.500h5v4.800l-5-.6z" fill="#111"/></svg></button>
  <button class="tb run act" aria-label="Chrome"><svg width="24" height="24"><use href="#i-chrome"/></svg></button>
  <button class="tb run" aria-label="Control Panel"><svg width="21" height="16" viewBox="0 0 21 16"><path d="M0 0h21v16H0z" fill="#5fc1f2"/><path d="M1 1h19v14H1z" fill="#a7dcf7"/><circle cx="6" cy="6" r="3.500" fill="#1679c8"/><path d="M6 6V2.500A3.500 3.500 0 0 1 9.500 6z" fill="#f5b041"/><path d="M12 4h6v2h-6zM12 8h3v2h-3zM3 12h7v1.500H3zM12 12h6v1.500h-6z" fill="#1679c8"/><circle cx="17" cy="9" r="1.300" fill="#fff"/></svg></button>
  <button class="tb run" aria-label="Skype"><svg width="22" height="22" viewBox="0 0 22 22"><circle cx="11" cy="11" r="9.500" fill="#00aff0"/><circle cx="6" cy="6" r="5.500" fill="#00aff0"/><circle cx="16" cy="16" r="5.500" fill="#00aff0"/><path d="M15 7.500Q13.500 5.500 11 5.500c-5 0-5 4-1.500 5l3 .7c4 1 3 5.300-1.500 5.300-2.500 0-4-1-4.500-2.500" fill="none" stroke="#fff" stroke-width="2.500"/></svg></button>
  <button class="tb run" aria-label="Sublime Text"><svg width="22" height="20" viewBox="0 0 22 20"><path d="M0 4h22v15H0z" fill="#bbb"/><path d="M2 0h18l1 16H1z" fill="#4b4b4b"/><path d="M14.500 5Q13 3.500 11 3.500c-4 0-4 3.500-1 4l2 .4c3.500.8 2.500 4.600-1 4.600-2 0-3-.8-3.800-1.600" fill="none" stroke="#f29a30" stroke-width="2.200"/></svg></button>
  <button class="tb run" aria-label="WhatsApp"><svg width="22" height="22" viewBox="0 0 22 22"><path d="M0 22l1.600-5.800A10.800 10.800 0 1 1 6 20.500z" fill="#fff"/><path d="M2 20l1-4a9 9 0 1 1 3.500 3z" fill="#2bb741"/><path d="M7 6q1-1 2 0l1 2.300-1 1.400q1.300 2.300 3.500 3.300l1.300-1.500 2.400 1.200q.5 1.500-1 2.500-2 1.300-5-.5-4.200-2.500-4.700-5.700Q5.500 7.500 7 6z" fill="#fff"/></svg></button>
  <button class="tb run" aria-label="Sticky Notes"><svg width="18" height="18" viewBox="0 0 18 18"><path d="M0 0h18v11l-7 7H0z" fill="#f0e68c"/><path d="M18 11l-7 7v-7z" fill="#8a8455"/></svg></button>
  <div class="tray">
    <button aria-label="Show hidden icons"><svg width="14" height="8"><use href="#i-chev"/></svg></button>
    <button aria-label="Dropbox"><svg width="16" height="16" viewBox="0 0 16 16"><path d="M4 0l3.500 2.500L4 5 .5 2.500zM11 0l3.500 2.500L11 5 7.500 2.500zM4 5l3.500 2.500L4 10 .5 7.500zM11 5l3.500 2.500L11 10 7.500 7.500zM4 11l3.500-2.500L11 11l-3.500 2.500z" fill="#fff"/><circle cx="11" cy="11" r="4.200" fill="#2eb135"/><path d="M9 11l1.500 1.500L13 9.500" fill="none" stroke="#fff" stroke-width="1.200"/></svg></button>
    <button aria-label="Network"><svg width="16" height="16"><use href="#i-wifi"/></svg></button>
    <button aria-label="Volume"><svg width="18" height="14"><use href="#i-vol"/></svg></button>
    <div class="clock"><span>10:37 PM</span><span>1/1/2017</span></div>
    <button class="note" aria-label="Notifications"><svg width="18" height="18" viewBox="0 0 18 18"><path d="M1.500 2h15v11.500h-5.300L9 16l-2.200-2.500H1.500z" fill="none" stroke="#fff" stroke-width="1.200"/></svg></button>
    <i class="peek"></i>
  </div>
</footer>
</body>
</html>
```
FILE: styles.css
```css
* { box-sizing: border-box; }
body {
  margin: 0;
  height: 100vh;
  display: flex;
  flex-direction: column;
  overflow: hidden;
  font-family: "Open Sans", "Noto Sans", sans-serif;
  font-size: 12px;
  color: #333;
}
button {
  margin: 0;
  padding: 0;
  border: 0;
  background: none;
  font: inherit;
  color: inherit;
  display: flex;
  align-items: center;
  justify-content: center;
}
input { font: inherit; color: inherit; border: 0; padding: 0; margin: 0; min-width: 0; }
a { color: inherit; text-decoration: none; }
p { margin: 0; }
i { font-style: normal; }
svg { display: block; flex: none; }
.defs { position: absolute; width: 0; height: 0; }
.fade {
  -webkit-mask-image: linear-gradient(to right, #000 82%, transparent);
  mask-image: linear-gradient(to right, #000 82%, transparent);
}

/* Browser */
.browser { flex: none; background: #f2f2f2; border-bottom: 1px solid #b4b4b8; font-size: 11px; }
.tabstrip { display: flex; height: 29px; background: #fff; border-bottom: 1px solid #a8a8a8; }
.tab { position: relative; display: flex; align-items: center; height: 29px; }
.tab > * { position: relative; }
.tab .tab-shape { position: absolute; left: 0; top: 0; width: 100%; height: 29px; }
.tab-one { width: 200px; margin-left: 5px; padding: 0 11px 0 18px; gap: 7px; }
.tab-one .tab-shape { width: 103%; }
.tab-two { width: 206px; margin-left: -7px; padding: 0 17px 0 17px; gap: 6px; height: 30px; }
.tab-title { flex: 1; white-space: nowrap; overflow: hidden; color: #333; }
.newtab { align-self: flex-start; margin-top: 6px; }
.win-controls { margin-left: auto; margin-right: 2px; display: flex; height: 26px; }
.win-controls button { width: 46px; }
.win-controls .profile { width: 49px; height: 19px; margin-right: 6px; background: #b0b0b0; color: #fff; text-shadow: 0 0 2px #444; }
.toolbar { display: flex; align-items: center; height: 36px; padding: 0 16px 0 10px; gap: 12px; }
.toolbar > button { width: 16px; }
.omnibox { flex: 1; display: flex; align-items: center; gap: 8px; height: 28px; margin-left: -2px; padding: 0 7px 0 10px; background: #fff; border: 1px solid #a9a9a9; border-radius: 3px; }
.url { flex: 1; font-family: Roboto, "Open Sans", sans-serif; font-size: 14px; color: #808080; white-space: nowrap; outline: 0; }
.secure { color: #0b8043; }
.host { color: #111; }
.extensions { display: flex; align-items: center; gap: 16px; }
.menu { margin-left: 6px; }
.bookmarks { display: flex; align-items: center; height: 24px; padding: 0 23px 4px 10px; gap: 13px; color: #222; }
.bm { display: flex; align-items: center; gap: 5px; width: 137px; white-space: nowrap; }
.bm span { flex: 1; overflow: hidden; }
.bm-apps { width: 47px; gap: 6px; }
.bm-air { width: 119px; }
.bm-more { margin-left: auto; }

/* Meeting */
.meeting { position: relative; flex: 1; min-height: 0; display: flex; }
.stage {
  flex: 1;
  min-width: 0;
  display: flex;
  padding: 3px 76px 0;
  background:
    linear-gradient(to bottom, #d0d0d2, #b8bac0 30%, #979eac 65%, #808b9b) left / 76px 100% no-repeat,
    linear-gradient(175deg, #78839a, #959aa7 35%, #b0b4bc 68%, #c8c9cc) right / 76px 100% no-repeat,
    linear-gradient(to right, #cfcfd1, #c5c8d0 60%, #78839a);
}
.paint { position: relative; flex: 1; min-width: 0; display: flex; flex-direction: column; background: #fefdfe; font-size: 8px; }
.p-title { display: flex; align-items: center; height: 16px; gap: 5px; color: #222; font-family: "Noto Sans", sans-serif; }
.p-sep { width: 1px; height: 10px; background: #999; }
.p-win { margin-left: auto; display: flex; gap: 25px; padding-right: 14px; }
.p-tabs { display: flex; height: 17px; }
.p-file { width: 41px; background: #1979ca; color: #fff; }
.p-home { width: 41px; background: #f6f4f8; border: 1px solid #e6e3e9; border-bottom: 0; }
.p-view { width: 37px; }
.p-help { margin-left: auto; display: flex; align-items: center; gap: 6px; padding-right: 2px; }
.help { width: 11px; height: 11px; border-radius: 50%; background: #0f6cc0; color: #fff; font-weight: 700; }
.muted { color: #8f8d98; }
.ribbon { display: flex; height: 67px; background: #f6f4f8; border-top: 1px solid #edebef; border-bottom: 1px solid #dddfe8; color: #444; }
.group { display: flex; flex-direction: column; justify-content: space-between; padding: 3px 0 0; border-right: 1px solid #e0dee5; }
.g-clip { width: 74px; }
.g-image { width: 83px; }
.g-tools { width: 57px; }
.g-brush { width: 36px; }
.g-shapes { width: 168px; }
.g-size { width: 36px; }
.g-colors { width: 257px; }
.g-body { display: flex; gap: 4px; padding: 0 2px; }
.g-name { text-align: center; line-height: 12px; color: #666; }
.big { flex-direction: column; justify-content: flex-start; gap: 2px; width: 32px; line-height: 12px; }
.caret { border: 2px solid transparent; border-top-color: #333; border-bottom: 0; }
.caret.pale { border-top-color: #aaa; margin-bottom: 3px; }
.caret.up { border: 2px solid transparent; border-bottom-color: #999; border-top: 0; }
.caret.last { border-top-width: 3px; }
.stack { display: flex; flex-direction: column; gap: 0; margin-top: -1px; }
.stack button { justify-content: flex-start; gap: 3px; height: 15px; white-space: nowrap; }
.tool-grid { display: grid; grid-template-columns: repeat(3, 17px); gap: 4px 0; padding: 3px 2px 0; }
.tool-grid button { height: 17px; }
.tool-grid .on { background: #c8def5; border: 1px solid #8ab4df; }
.shape-box { display: flex; border: 1px solid #dbd9e3; background: #fbfcfe; height: 46px; }
.scroll { width: 9px; display: flex; flex-direction: column; justify-content: space-around; align-items: center; border-left: 1px solid #e3e1e9; background: #f6f4f8; }
.g-size .g-body, .g-brush .g-body { justify-content: center; }
.g-colors .g-body { gap: 0; padding-left: 3px; }
.col { flex-direction: column; justify-content: flex-start; width: 30px; height: 49px; padding-top: 2px; gap: 3px; line-height: 10px; margin-top: -1px; }
.col-on { background: #c3dcf5; border: 1px solid #83b2e0; padding-top: 1px; }
.sw-big { width: 24px; height: 24px; background: #000; border: 1px solid #8a8a99; outline: 1px solid #dde6f0; outline-offset: -2px; }
.sw-small { width: 18px; height: 18px; margin: 3px; background: #fff; border: 1px solid #aaa; }
.palette { display: grid; grid-template-columns: repeat(10, 15px); grid-auto-rows: 15px; gap: 1px; margin: -1px 1px 0; }
.palette i { border: 1px solid #aaa8b0; box-shadow: inset 0 0 0 1px #f6f4f8; }
.c-black { background: #000; } .c-gray { background: #7f7f7f; } .c-maroon { background: #880015; } .c-red { background: #ed1c24; } .c-orange { background: #ff7f27; }
.c-yellow { background: #fff200; } .c-green { background: #22b14c; } .c-blue { background: #00a2e8; } .c-indigo { background: #3f48cc; } .c-purple { background: #a349a4; }
.c-white { background: #fff; } .c-silver { background: #c3c3c3; } .c-brown { background: #b97a57; } .c-pink { background: #ffaec9; } .c-gold { background: #ffc90e; }
.c-cream { background: #efe4b0; } .c-lime { background: #b5e61d; } .c-sky { background: #99d9ea; } .c-steel { background: #7092be; } .c-lilac { background: #c8bfe7; }
.rainbow { width: 22px; height: 22px; border: 1px solid #aaa; background: linear-gradient(to bottom, transparent, rgba(128,128,128,.7)), linear-gradient(to right, #f60, #ee0, #0d0, #0dd, #22f, #e0e, #f22); }

.workspace { flex: 1; min-height: 0; display: flex; padding: 3px 186px 12px 3px; background: linear-gradient(to bottom, #c5cfe0, #cfd9e9 40%, #d5e0f0 65%, #dce6f7); }
.canvas { position: relative; flex: 1; background: #fefeff; box-shadow: 2px 2px 3px #a7b2c8; }
.doc { width: 504px; padding: 8px 0 0 3px; color: #3c3c40; font-family: "Noto Sans", sans-serif; }
.filters { display: flex; justify-content: space-between; width: 501px; }
.filters div { display: flex; gap: 2px; line-height: 19px; }
.inp { height: 21px; border: 1px solid #cfcdd6; background: #fff; padding: 0 7px; color: #777; }
.inp::placeholder { color: #999; opacity: 1; }
.inp-n { width: 41px; }
.inp-s { width: 156px; }
table { width: 501px; height: 300px; border-collapse: collapse; table-layout: fixed; }
th { height: 21px; padding: 0 0 1px 5px; text-align: left; font-weight: 600; background: #f6f5f8; border-bottom: 1px solid #cfcdd6; color: #222; }
th svg { display: inline-block; }
.t-name { width: 149px; }
.t-mail { width: 191px; }
.t-date { width: 93px; }
td { padding: 4px 0 0 5px; vertical-align: top; line-height: 12px; border-bottom: 1px solid #dddbe2; }
tr:last-child td { border-bottom: 0; }
.acts { display: flex; }
.acts button { width: 20px; height: 18px; border: 1px solid #d3d1da; }
.acts button + button { border-left: 0; }
.pager-row { display: flex; justify-content: space-between; width: 501px; margin-top: 10px; line-height: 12px; }
.pager { display: flex; border: 1px solid #dddbe4; }
.pager a { width: 20px; height: 19px; line-height: 19px; text-align: center; color: #3f86b8; border-right: 1px solid #dddbe4; }
.pager a:last-child { border-right: 0; }
.pager .dim { color: #888; }
.pager .cur { background: #2980b9; color: #fff; }
.pager .wide { width: 24px; }
.pager .arr { width: 18px; }
.ink { position: absolute; left: 0; top: 0; pointer-events: none; }
.handle { position: absolute; width: 4px; height: 4px; background: #fff; border: 1px solid #667; }
.h-right { right: -4px; top: 50%; }
.h-corner { right: -4px; bottom: -4px; }

.p-status { display: flex; align-items: center; height: 19px; padding-bottom: 2px; background: #f1eff2; color: #333; border-top: 1px solid #e4e3e8; font-family: "Noto Sans", sans-serif; }
.st { display: flex; align-items: center; gap: 3px; height: 16px; padding-left: 3px; border-right: 1px solid #dddbe0; }
.st-pos { width: 117px; }
.st-sel { width: 119px; }
.st-dim { width: 120px; }
.zoomer { margin-left: auto; display: flex; align-items: center; gap: 5px; height: 16px; padding: 0 3px 0 14px; border-left: 1px solid #d5d3d9; }
.range { width: 70px; height: 12px; appearance: none; background: linear-gradient(#bbb, #bbb) center / 62px 1px no-repeat; }
.range::-webkit-slider-thumb { appearance: none; width: 7px; height: 10px; background: #1377d1; }

.inner-bar { display: flex; height: 27px; background: #111013; color: #f0f0f0; overflow: hidden; border-top: 1px solid #555; }
.ib { width: 36px; }
.ib:nth-child(7) { width: 40px; }
.task { width: 118px; justify-content: flex-start; gap: 3px; padding-left: 8px; white-space: nowrap; font-family: "Noto Sans", sans-serif; }
.task-on { background: #35343a; }
.badge-ic { position: relative; }
.mini { position: absolute; right: -1px; bottom: -1px; }
.inner-tray { margin-left: auto; display: flex; align-items: center; gap: 7px; padding-right: 91px; }

.share { position: absolute; left: 50%; bottom: 30px; transform: translateX(-50%); display: flex; align-items: center; width: 458px; height: 32px; padding: 0 7px 2px 6px; background: #f9f7fa; border: 1px solid #d2d0d6; border-radius: 2px; box-shadow: 0 1px 2px #aaa; white-space: nowrap; font-family: "Noto Sans", sans-serif; }
.grip { width: 4px; height: 9px; border: solid #ccc; border-width: 0 1px; margin-right: 8px; }
.share button { width: 69px; height: 21px; margin-left: auto; margin-right: 9px; background: #6a9bf8; color: #fff; }
.share a { color: #4a6fc0; }

.side { flex: none; width: 80px; display: flex; flex-direction: column; align-items: center; background: #495164; }
.exit { width: 100%; height: 45px; flex-direction: column; gap: 1px; padding-top: 1px; background: #d9dcde; color: #e36a5e; line-height: 15px; }
.round { width: 46px; height: 46px; border-radius: 50%; }
.mic { margin-top: 28px; background: #05b07c; border: 1px solid #7fdc90; box-shadow: 0 0 14px #138f70; }
.screen { margin-top: 16px; background: #596377; border: 1px solid #6b7485; }
hr { width: 68px; margin: 18px 0 0; border: 0; border-top: 1px solid #8e98a8; }
.si { margin-top: 33px; }
.people { margin-top: 14px; margin-left: 8px; gap: 0; color: #8096ba; }
.people sup { font-size: 13px; line-height: 12px; margin-bottom: 11px; font-weight: 600; }
.people svg { margin-bottom: -2px; }
.people + .si { margin-top: 36px; }
.side-end { margin-top: auto; padding-bottom: 22px; display: flex; flex-direction: column; align-items: center; gap: 24px; }

.talking { position: absolute; right: 80px; bottom: 0; display: flex; align-items: center; height: 35px; padding: 0 3px 0 14px; gap: 6px; background: #495164; border-right: 1px solid #ddd; color: #fff; white-space: nowrap; font-family: "Noto Sans", sans-serif; font-size: 13px; }
.drag { width: 6px; height: 35px; background: repeating-linear-gradient(#8a92a3 0 1px, transparent 1px 4px); }
.watermark { position: absolute; right: 57px; bottom: 34px; width: 236px; color: rgba(160, 160, 165, .8); white-space: nowrap; pointer-events: none; font-family: "Noto Sans", sans-serif; }
.w1 { font-size: 19px; line-height: 24px; }
.w2 { font-size: 14px; line-height: 20px; }

/* Taskbar */
.taskbar { flex: none; display: flex; height: 40px; background: linear-gradient(to right, #120f0c, #171410 45%, #0b0b0b 62%, #17171a 80%, #0b0a09); color: #fff; }
.start { width: 48px; }
.cortana { display: flex; align-items: center; width: 344px; padding: 0 14px 0 9px; gap: 5px; background: #333; }
.cortana input { flex: 1; background: none; color: #fff; font-size: 14px; }
.cortana input::placeholder { color: #999; opacity: 1; }
.tb { width: 48px; margin-right: 1px; border: solid transparent; border-width: 2px 0; }
.tb-view { margin-right: 3px; }
.run { background: linear-gradient(#76b9ed, #76b9ed) center bottom / 40px 2px no-repeat border-box; }
.act { background: linear-gradient(#76b9ed, #76b9ed) center bottom / 48px 2px no-repeat border-box, #403e3c; }
.tray { margin-left: auto; display: flex; align-items: center; }
.tray button { width: 24px; }
.clock { width: 56px; margin-left: 4px; display: flex; flex-direction: column; align-items: center; line-height: 18px; font-size: 11px; white-space: nowrap; }
.tray .note { width: 48px; margin-right: 4px; }
.peek { width: 5px; height: 40px; border-left: 1px solid #555; }
```
